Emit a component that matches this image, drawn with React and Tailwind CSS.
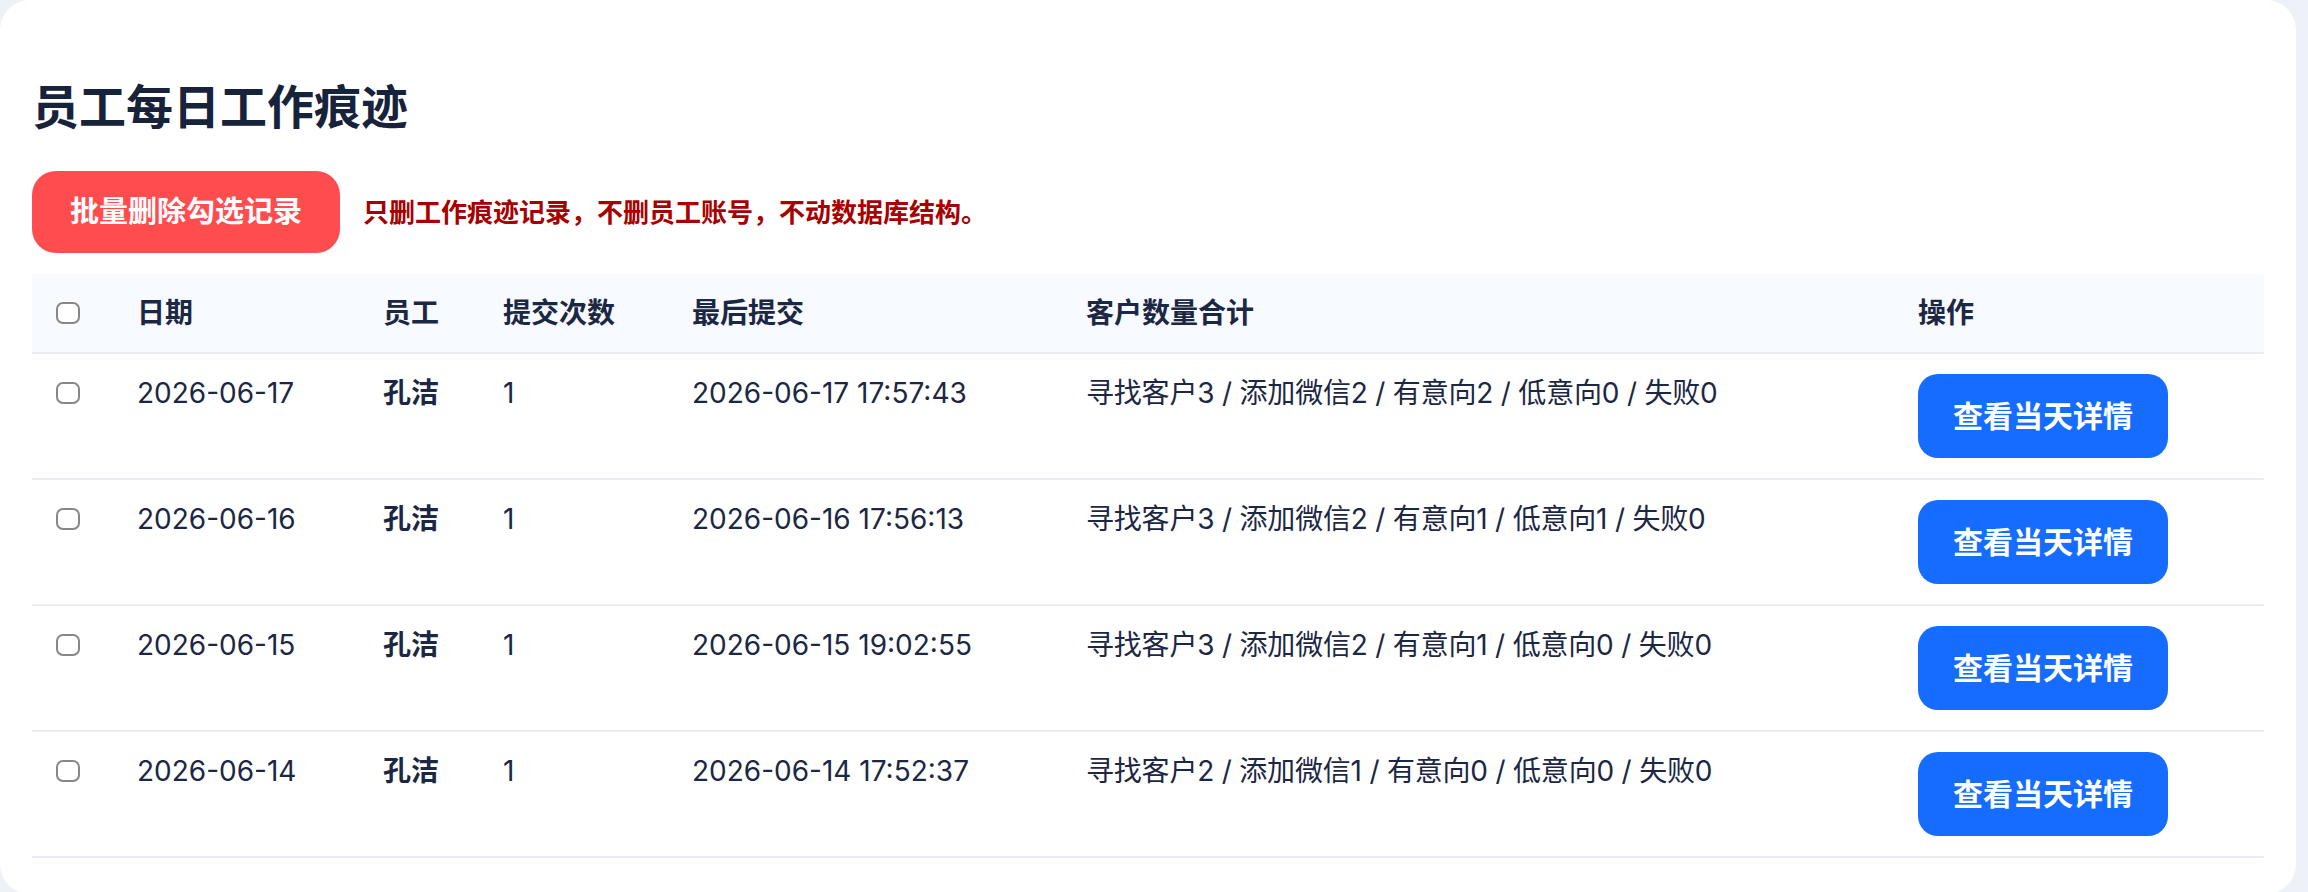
import React from 'react';

const rows = [
  { date: '2026-06-17', name: '孔洁', count: 1, last: '2026-06-17 17:57:43', summary: '寻找客户3 / 添加微信2 / 有意向2 / 低意向0 / 失败0' },
  { date: '2026-06-16', name: '孔洁', count: 1, last: '2026-06-16 17:56:13', summary: '寻找客户3 / 添加微信2 / 有意向1 / 低意向1 / 失败0' },
  { date: '2026-06-15', name: '孔洁', count: 1, last: '2026-06-15 19:02:55', summary: '寻找客户3 / 添加微信2 / 有意向1 / 低意向0 / 失败0' },
  { date: '2026-06-14', name: '孔洁', count: 1, last: '2026-06-14 17:52:37', summary: '寻找客户2 / 添加微信1 / 有意向0 / 低意向0 / 失败0' },
];

const Checkbox = () => (
  <div className="h-[38px] flex items-center">
    <span className="block w-[24px] h-[22px] rounded-[7px] border-[2.5px] border-[#878787] bg-white" />
  </div>
);

export default function App() {
  return (
    <div className="min-h-screen bg-[#eef1f7] pr-3 font-['Inter','Noto_Sans_CJK_SC',sans-serif] text-[#1c2744]">
      <div className="bg-white rounded-[30px] h-[894px] px-8 pt-[77px]">
        {/* 标题 */}
        <h1 className="text-[47px] leading-[60px] font-bold text-[#17223b]">员工每日工作痕迹</h1>

        {/* 批量操作 */}
        <div className="mt-[34px] flex items-center gap-[23px]">
          <button className="h-[82px] px-[38px] rounded-[24px] bg-[#ff4d4f] text-white text-[29px] font-bold">
            批量删除勾选记录
          </button>
          <span className="text-[26px] font-bold text-[#a80000]">
            只删工作痕迹记录，不删员工账号，不动数据库结构。
          </span>
        </div>

        {/* 表格 */}
        <table className="mt-[21px] w-full table-fixed border-collapse text-left text-[28px] leading-[38px]">
          <colgroup>
            <col className="w-[81px]" />
            <col className="w-[246px]" />
            <col className="w-[120px]" />
            <col className="w-[189px]" />
            <col className="w-[394px]" />
            <col className="w-[832px]" />
            <col />
          </colgroup>
          <thead>
            <tr className="bg-[#f7faff] border-b-2 border-[#e9edf3]">
              <th className="pl-6 py-5 align-top"><Checkbox /></th>
              <th className="pl-6 py-5 align-top font-bold">日期</th>
              <th className="pl-6 py-5 align-top font-bold">员工</th>
              <th className="pl-6 py-5 align-top font-bold">提交次数</th>
              <th className="pl-6 py-5 align-top font-bold">最后提交</th>
              <th className="pl-6 py-5 align-top font-bold">客户数量合计</th>
              <th className="pl-6 py-5 align-top font-bold">操作</th>
            </tr>
          </thead>
          <tbody>
            {rows.map((r) => (
              <tr key={r.date} className="border-b-2 border-[#e9edf3]">
                <td className="pl-6 py-5 align-top"><Checkbox /></td>
                <td className="pl-6 py-5 align-top">{r.date}</td>
                <td className="pl-6 py-5 align-top font-bold">{r.name}</td>
                <td className="pl-6 py-5 align-top">{r.count}</td>
                <td className="pl-6 py-5 align-top">{r.last}</td>
                <td className="pl-6 py-5 align-top tracking-[-0.2px]">{r.summary}</td>
                <td className="pl-6 py-5 align-top">
                  <button className="h-[84px] w-[250px] rounded-[20px] bg-[#166cff] text-white text-[30px] font-bold">
                    查看当天详情
                  </button>
                </td>
              </tr>
            ))}
          </tbody>
        </table>
      </div>
    </div>
  );
}
